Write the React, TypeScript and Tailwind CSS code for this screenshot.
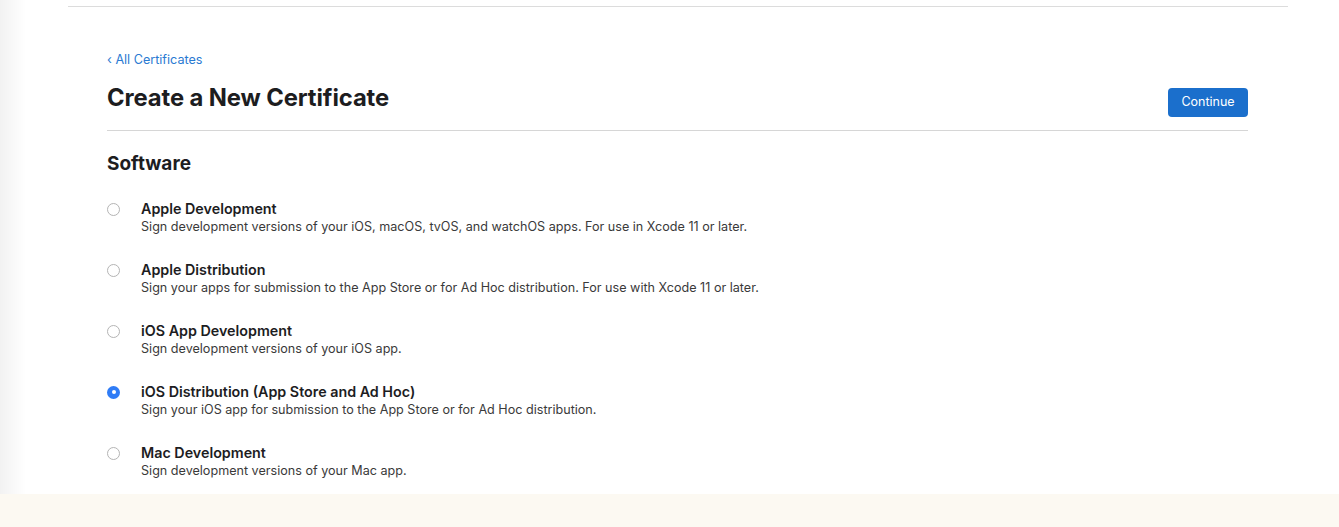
import React, { useState } from "react";

type CertOption = {
  id: string;
  title: string;
  description: string;
};

const options: CertOption[] = [
  {
    id: "apple-dev",
    title: "Apple Development",
    description:
      "Sign development versions of your iOS, macOS, tvOS, and watchOS apps. For use in Xcode 11 or later.",
  },
  {
    id: "apple-dist",
    title: "Apple Distribution",
    description:
      "Sign your apps for submission to the App Store or for Ad Hoc distribution. For use with Xcode 11 or later.",
  },
  {
    id: "ios-dev",
    title: "iOS App Development",
    description: "Sign development versions of your iOS app.",
  },
  {
    id: "ios-dist",
    title: "iOS Distribution (App Store and Ad Hoc)",
    description: "Sign your iOS app for submission to the App Store or for Ad Hoc distribution.",
  },
  {
    id: "mac-dev",
    title: "Mac Development",
    description: "Sign development versions of your Mac app.",
  },
];

const Radio: React.FC<{ checked: boolean }> = ({ checked }) =>
  checked ? (
    <span className="flex h-[13px] w-[13px] shrink-0 items-center justify-center rounded-full bg-[#2f7cf6]">
      <span className="h-[4px] w-[4px] rounded-full bg-white" />
    </span>
  ) : (
    <span className="h-[13px] w-[13px] shrink-0 rounded-full border border-[#b4b4b4] bg-white" />
  );

const App: React.FC = () => {
  const [selected, setSelected] = useState("ios-dist");

  return (
    <div className="min-h-[527px] bg-[#fcf9f2] font-['Inter',sans-serif] text-[#1d1d1f]">
      <div className="bg-[linear-gradient(to_right,#f2f2f2,#ffffff_26px)] pt-[6px] pb-[15px]">
        <div className="ml-[68px] w-[1220px] border-t border-[#dcdcdc]" />

        <div className="ml-[107px] w-[1141px]">
          {/* back link */}
          <a href="#" className="mt-[45px] block text-[12.6px] leading-[16px] text-[#2a7ad2]">
            ‹ All Certificates
          </a>

          {/* header */}
          <div className="mt-[15px] flex items-start justify-between border-b border-[#d6d6d6] pb-[13px]">
            <h1 className="text-[23.8px] font-bold leading-[30px] tracking-[-0.1px]">
              Create a New Certificate
            </h1>
            <button className="mt-[5px] h-[29px] w-[80px] rounded-[4px] bg-[#1b6fcc] text-[12.5px] text-white">
              Continue
            </button>
          </div>

          <h2 className="mt-[21px] text-[19px] font-bold leading-[24px]">Software</h2>

          {/* options */}
          <div className="mt-[23px] flex flex-col gap-[25px]">
            {options.map(opt => (
              <label
                key={opt.id}
                className="flex cursor-pointer items-start"
                onClick={() => setSelected(opt.id)}
              >
                <span className="mr-[21px] flex h-[20px] items-center">
                  <Radio checked={selected === opt.id} />
                </span>
                <span className="flex flex-col">
                  <span className="text-[14.3px] font-semibold leading-[20px]">{opt.title}</span>
                  <span className="text-[12.6px] leading-[16px] text-[#3a3a3a]">
                    {opt.description}
                  </span>
                </span>
              </label>
            ))}
          </div>
        </div>
      </div>
    </div>
  );
};

export default App;
